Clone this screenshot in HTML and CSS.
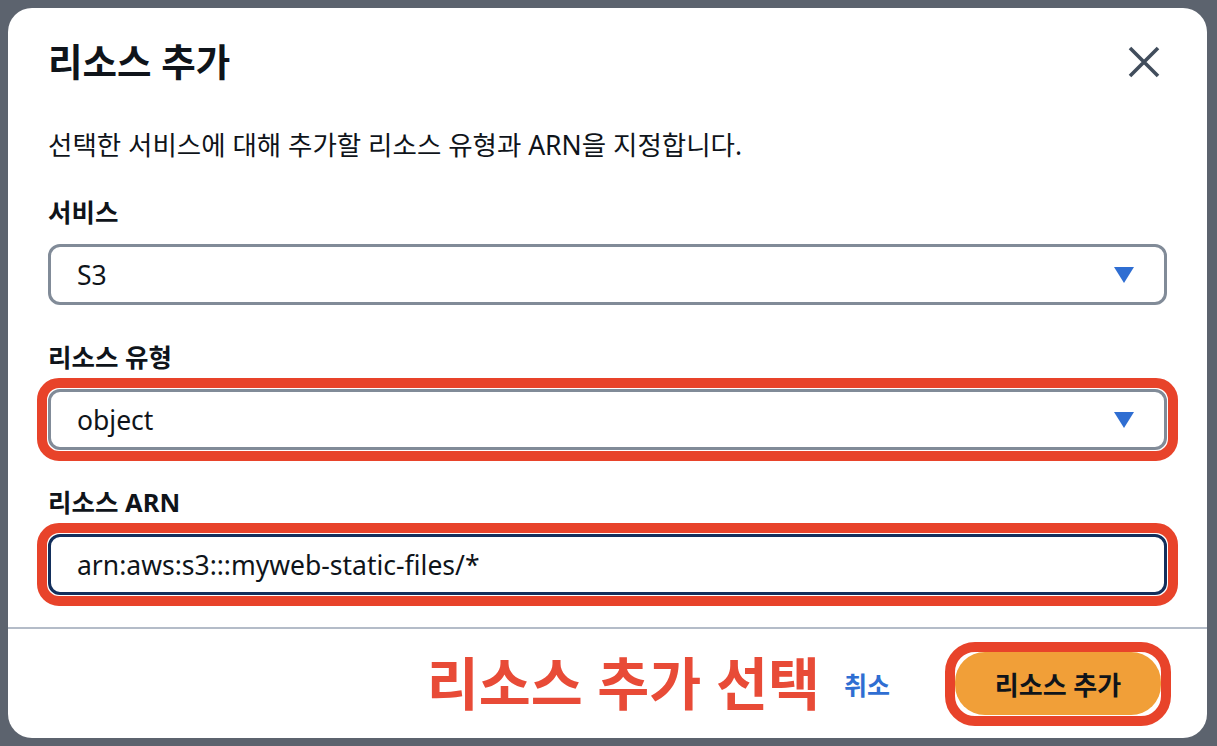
FILE: index.html
```html
<!DOCTYPE html>
<html lang="ko">
<head>
    <meta charset="UTF-8">
    <title>리소스 추가</title>
    <link rel="stylesheet" href="styles.css">
</head>
<body>
    <div class="modal">
        <div class="modal-header">
            <h1 class="modal-title">리소스 추가</h1>
            <button class="close-btn" aria-label="닫기">
                <svg width="32" height="32" viewBox="0 0 32 32">
                    <path d="M2 2 L30 30 M30 2 L2 30" stroke="#414d5c" stroke-width="3.6" fill="none"/>
                </svg>
            </button>
        </div>

        <div class="modal-body">
            <p class="description">선택한 서비스에 대해 추가할 리소스 유형과 ARN을 지정합니다.</p>

            <div class="fields">
                <div class="field">
                    <label class="field-label">서비스</label>
                    <div class="select">
                        <span class="select-value">S3</span>
                        <span class="caret"></span>
                    </div>
                </div>

                <div class="field">
                    <label class="field-label">리소스 유형</label>
                    <div class="mark">
                        <div class="select">
                            <span class="select-value">object</span>
                            <span class="caret"></span>
                        </div>
                    </div>
                </div>

                <div class="field">
                    <label class="field-label">리소스 ARN</label>
                    <div class="mark">
                        <div class="input">arn:aws:s3:::myweb-static-files/*</div>
                    </div>
                </div>
            </div>
        </div>

        <div class="modal-footer">
            <span class="annotation">리소스 추가 선택</span>
            <a class="cancel-link" href="#">취소</a>
            <div class="mark mark-btn">
                <button class="primary-btn">리소스 추가</button>
            </div>
        </div>
    </div>
</body>
</html>
```

FILE: styles.css
```css
:root {
    --text-color: #0f141a;
    --border-color: #818b98;
    --link-color: #2f6ed2;
    --mark-color: #e8432a;
    --orange: #f19f38;
}

* {
    margin: 0;
    padding: 0;
    box-sizing: border-box;
}

body {
    font-family: 'Noto Sans', 'Noto Sans CJK KR', sans-serif;
    background-color: #5c636e;
    color: var(--text-color);
    width: 1217px;
    height: 746px;
    overflow: hidden;
}

.modal {
    margin: 8px;
    width: 1199px;
    height: 730px;
    background-color: white;
    border-radius: 24px;
    display: flex;
    flex-direction: column;
}

.modal-header {
    display: flex;
    justify-content: space-between;
    align-items: center;
    padding: 33px 47px 0 40px;
}

.modal-title {
    font-size: 37.5px;
    line-height: 42px;
    font-weight: 700;
}

.close-btn {
    width: 32px;
    height: 32px;
    border: none;
    background: none;
    display: flex;
}

.modal-body {
    padding: 45px 40px 0;
    flex: 1;
}

.description {
    font-size: 26.5px;
    line-height: 34px;
}

.fields {
    margin-top: 33px;
    display: flex;
    flex-direction: column;
    gap: 35px;
}

.field {
    display: flex;
    flex-direction: column;
    gap: 15px;
}

.field-label {
    font-size: 25.5px;
    line-height: 34px;
    font-weight: 700;
}

.select,
.input {
    height: 61px;
    border: 3px solid var(--border-color);
    border-radius: 12px;
    display: flex;
    align-items: center;
    padding: 0 30px 0 26px;
    font-size: 26.5px;
}

.select {
    justify-content: space-between;
}

.input {
    border-color: #132f5c;
}

.caret {
    width: 0;
    height: 0;
    border-left: 10px solid transparent;
    border-right: 10px solid transparent;
    border-top: 16px solid var(--link-color);
}

.mark {
    position: relative;
}

.mark::after {
    content: '';
    position: absolute;
    top: -11px;
    left: -11px;
    right: -11px;
    bottom: -11px;
    border: 10px solid var(--mark-color);
    border-radius: 22px;
    pointer-events: none;
}

.modal-footer {
    border-top: 2px solid #b4bcc8;
    display: flex;
    align-items: center;
    justify-content: flex-end;
    padding: 23px 46px 23px 40px;
}

.annotation {
    font-size: 56.5px;
    line-height: 63px;
    font-weight: 700;
    color: #e84b37;
    margin-right: 24px;
}

.cancel-link {
    font-size: 25px;
    font-weight: 700;
    color: var(--link-color);
    text-decoration: none;
    margin-right: 65px;
}

.primary-btn {
    width: 206px;
    height: 63px;
    border: none;
    border-radius: 30px;
    background-color: var(--orange);
    font-family: inherit;
    font-size: 26px;
    font-weight: 700;
    color: var(--text-color);
}

.mark-btn::after {
    top: -10px;
    left: -10px;
    right: -10px;
    bottom: -11px;
    border-radius: 30px;
}
```
